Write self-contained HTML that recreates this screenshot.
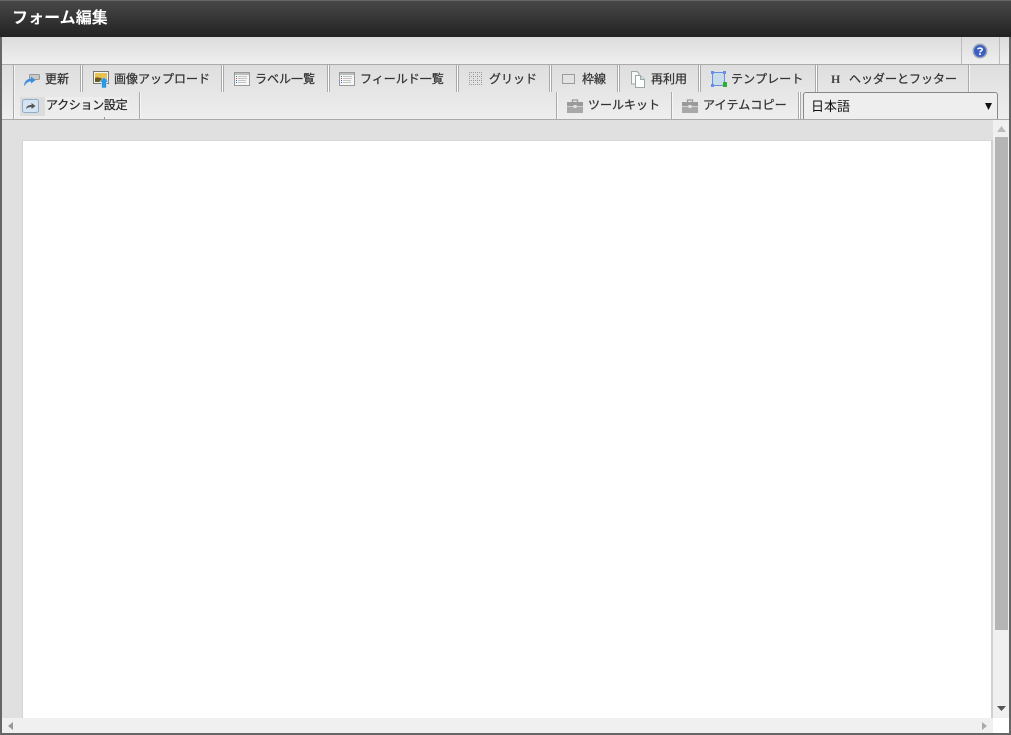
<!DOCTYPE html>
<html lang="ja"><head><meta charset="utf-8"><title>フォーム編集</title>
<style>
html,body{margin:0;padding:0}
body{width:1011px;height:735px;overflow:hidden;position:relative;background:#e0e0e0;font-family:"Liberation Sans","Noto Sans CJK JP",sans-serif;color:#333}
div,span,svg{position:absolute;display:block}
.t{font-size:12px;line-height:16px;white-space:nowrap;color:#333;-webkit-text-stroke:.25px #333}
.sep{width:1px;background:#aaa;border-right:1px solid #fff;box-shadow:1px 0 0 #aaa}
.s1{width:1px;background:#aaa;border-right:1px solid #f6f6f6}
</style></head><body>
<div style="left:0;top:0;width:1011px;height:37px;background:linear-gradient(#484848,#222);border-top:1px solid #666;box-sizing:border-box"></div>
<div style="left:12px;top:8px;font-size:16px;line-height:22px;font-weight:bold;color:#fff;white-space:nowrap;letter-spacing:.05px">フォーム編集</div>
<div style="left:2px;top:37px;width:1007px;height:28px;background:linear-gradient(#dcdcdc,#efefef);border-bottom:1px solid #aaa;box-sizing:border-box"></div>
<div style="left:961px;top:37px;width:1px;height:27px;background:#bbb"></div>
<div style="left:999px;top:37px;width:1px;height:27px;background:#bbb"></div>
<svg style="left:972px;top:43px" width="16" height="16" viewBox="0 0 16 16"><circle cx="8" cy="8" r="7.5" fill="#9fa8b8"/><circle cx="8" cy="8" r="6" fill="#3a60c4"/><path d="M5.800 6.300C6 4.800 10.200 4.600 10.200 6.600 10.200 8 8 7.800 8 9.400" fill="none" stroke="#fff" stroke-width="1.500"/><rect x="7.100" y="10.300" width="1.800" height="1.700" fill="#fff"/></svg>

<div style="left:2px;top:65px;width:1007px;height:27px;background:linear-gradient(#dedede,#e6e6e6)"></div>
<div style="left:2px;top:92px;width:1007px;height:28px;background:linear-gradient(#e6e6e6,#eeeeee);border-bottom:1px solid #aaa;box-sizing:border-box"></div>

<div class="s1" style="left:13px;top:65px;height:54px"></div>
<div class="sep" style="left:80px;top:65px;height:27px"></div>
<div class="sep" style="left:221px;top:65px;height:27px"></div>
<div class="sep" style="left:327px;top:65px;height:27px"></div>
<div class="sep" style="left:456px;top:65px;height:27px"></div>
<div class="sep" style="left:549px;top:65px;height:27px"></div>
<div class="sep" style="left:617px;top:65px;height:27px"></div>
<div class="sep" style="left:698px;top:65px;height:27px"></div>
<div class="sep" style="left:815px;top:65px;height:27px"></div>
<div class="s1" style="left:968px;top:65px;height:27px"></div>

<div class="s1" style="left:139px;top:92px;height:27px"></div>
<div class="s1" style="left:556px;top:92px;height:27px"></div>
<div class="s1" style="left:671px;top:92px;height:27px"></div>
<div class="sep" style="left:798px;top:92px;height:27px"></div>
<div style="left:104px;top:117px;width:1px;height:2px;background:#999"></div>

<svg style="left:24px;top:73px" width="16" height="13" viewBox="0 0 16 13"><rect x="5.500" y="1.500" width="10" height="5" rx="1" fill="#c8c8c8" stroke="#999"/><path d="M0 12.500C.5 8 3.500 5.800 7 5.800V3.500L11.500 7.300 7 10.500V8.500C4.500 8.500 2.500 9.500 .8 12.500Z" fill="#3f8fdc"/></svg>
<div class="t" style="left:45px;top:70.500px">更新</div>

<svg style="left:93px;top:71px" width="16" height="17" viewBox="0 0 16 17"><rect x=".5" y=".5" width="15" height="12" fill="#f4f4f4" stroke="#777"/><rect x="2" y="2" width="12" height="9" fill="#e8c050"/><path d="M2 7C5 5 8 8 14 8V11H2Z" fill="#6b5a20"/><path d="M11 6L15.500 11H13.500V17H8.500V11H6.500Z" fill="#2a9ae0" stroke="#eef" stroke-width=".5"/></svg>
<div class="t" style="left:114px;top:70.500px">画像アップロード</div>

<svg style="left:234px;top:72px" width="16" height="14" viewBox="0 0 16 14"><rect x=".5" y=".5" width="15" height="13" fill="#f6f6f6" stroke="#999"/><rect x="1" y="1" width="14" height="2" fill="#bdbdbd"/><path d="M4 4.500H13M4 6.500H13M4 8.500H12M4 10.500H12" stroke="#c4c4c4"/><path d="M2 4.500H3" stroke="#2a9a3a"/><path d="M2 6.500H3" stroke="#d04030"/><path d="M2 8.500H3" stroke="#3060d0"/><path d="M2 10.500H3" stroke="#3060d0"/></svg>
<div class="t" style="left:255px;top:70.500px">ラベル一覧</div>

<svg style="left:339px;top:72px" width="16" height="14" viewBox="0 0 16 14"><rect x=".5" y=".5" width="15" height="13" fill="#f6f6f6" stroke="#999"/><rect x="1" y="1" width="14" height="2" fill="#bdbdbd"/><path d="M4 4.500H13M4 6.500H13M4 8.500H12M4 10.500H12" stroke="#c4c4c4"/><path d="M2 4.500H3" stroke="#2a9a3a"/><path d="M2 6.500H3" stroke="#d04030"/><path d="M2 8.500H3" stroke="#3060d0"/><path d="M2 10.500H3" stroke="#3060d0"/></svg>
<div class="t" style="left:360px;top:70.500px">フィールド一覧</div>

<svg style="left:469px;top:72px" width="14" height="14" viewBox="0 0 14 14"><path d="M.5 0V14M4.500 0V14M8.500 0V14M12.500 0V14M0 .5H14M0 4.500H14M0 8.500H14M0 12.500H14" stroke="#999" stroke-dasharray="1 1" fill="none"/></svg>
<div class="t" style="left:489px;top:70.500px">グリッド</div>

<svg style="left:562px;top:74px" width="13" height="10" viewBox="0 0 13 10"><rect x=".5" y=".5" width="12" height="9" fill="none" stroke="#555" stroke-dasharray="1 1"/></svg>
<div class="t" style="left:582px;top:70.500px">枠線</div>

<svg style="left:630px;top:71px" width="16" height="17" viewBox="0 0 16 17"><path d="M1.500.5H7L9 2.500V13H1.500Z" fill="#f8f8f8" stroke="#9aa8a8"/><path d="M5.500 4.500H10.500L14.500 8.500V16.500H5.500Z" fill="#fff" stroke="#9aa8a8"/><path d="M10.500 4.500V8.500H14.500" fill="#dde" stroke="#9aa8a8"/></svg>
<div class="t" style="left:651px;top:70.500px">再利用</div>

<svg style="left:711px;top:71px" width="16" height="17" viewBox="0 0 16 17"><rect x="1.500" y="1.500" width="12" height="13" fill="#c8dcea" stroke="#6a8ce4"/><rect x="0" y="0" width="3" height="3" fill="#6a8ce4"/><rect x="12" y="0" width="3" height="3" fill="#6a8ce4"/><rect x="0" y="13" width="3" height="3" fill="#6a8ce4"/><rect x="12" y="11" width="4" height="5" fill="#30b030"/></svg>
<div class="t" style="left:731px;top:70.500px;letter-spacing:.15px">テンプレート</div>

<div style="left:831px;top:71px;font:bold 12px/16px 'Liberation Serif',serif;color:#444">H</div>
<div class="t" style="left:849px;top:70.500px">ヘッダーとフッター</div>

<div style="left:20px;top:97px;width:25px;height:19px;background:#dcdcdc"></div>
<div style="left:45px;top:97px;width:84px;height:19px;background:#ededed"></div>
<svg style="left:22px;top:99px" width="17" height="14" viewBox="0 0 17 14"><rect x=".5" y=".5" width="16" height="13" rx="2" fill="#d4e4f2" stroke="#90acc8"/><path d="M4 10C4.500 7 6.500 6 9.500 6V4L13.500 7 9.500 10V8C7.500 8 5.500 8.500 4 10Z" fill="#555"/></svg>
<div class="t" style="left:46px;top:97px;color:#222;letter-spacing:-.3px">アクション設定</div>

<svg style="left:567px;top:99px" width="16" height="14" viewBox="0 0 16 14"><path d="M5.500 3.500V1H10.500V3.500" fill="none" stroke="#999" stroke-width="1.300"/><rect x="0" y="3" width="16" height="4" fill="#9a9a9a"/><rect x="0" y="8" width="16" height="6" fill="#a8a8a8"/><rect x="0" y="7" width="16" height="1" fill="#d0d0d0"/><rect x="6.500" y="6" width="3" height="3" fill="#e4e4e4"/></svg>
<div class="t" style="left:588px;top:97px">ツールキット</div>

<svg style="left:682px;top:99px" width="16" height="14" viewBox="0 0 16 14"><path d="M5.500 3.500V1H10.500V3.500" fill="none" stroke="#999" stroke-width="1.300"/><rect x="0" y="3" width="16" height="4" fill="#9a9a9a"/><rect x="0" y="8" width="16" height="6" fill="#a8a8a8"/><rect x="0" y="7" width="16" height="1" fill="#d0d0d0"/><rect x="6.500" y="6" width="3" height="3" fill="#e4e4e4"/></svg>
<div class="t" style="left:703px;top:97px;letter-spacing:.15px">アイテムコピー</div>

<div style="left:803px;top:92px;width:195px;height:27px;box-sizing:border-box;background:#eee;border:1px solid #888;border-bottom:0;border-radius:3px 3px 0 0"></div>
<div style="left:811px;top:98px;font-size:13px;line-height:17px;color:#111;white-space:nowrap">日本語</div>
<svg style="left:985px;top:103px" width="7" height="7" viewBox="0 0 7 7"><path d="M0 0H7L3.500 7Z" fill="#111"/></svg>

<div style="left:0;top:37px;width:2px;height:698px;background:#666"></div>
<div style="left:1009px;top:37px;width:2px;height:698px;background:#666"></div>
<div style="left:0;top:733px;width:1011px;height:2px;background:#666"></div>

<div style="left:22px;top:140px;width:971px;height:578px;background:#fff;box-sizing:border-box;border-left:1px solid #d4d4d4;border-top:1px solid #d8d8d8;border-right:2px solid #d0d0d0"></div>

<div style="left:993px;top:120px;width:16px;height:598px;background:#f0f0f0"></div>
<div style="left:995px;top:137px;width:13px;height:493px;background:#b5b5b5"></div>
<svg style="left:997px;top:126px" width="9" height="6" viewBox="0 0 9 6"><path d="M4.500 0L9 6H0Z" fill="#bbb"/></svg>
<svg style="left:997px;top:706px" width="9" height="5" viewBox="0 0 9 5"><path d="M0 0H9L4.500 5Z" fill="#555"/></svg>
<div style="left:2px;top:718px;width:991px;height:15px;background:#f0f0f0"></div>
<div style="left:993px;top:718px;width:16px;height:15px;background:#fff"></div>
<svg style="left:8px;top:722px" width="5" height="8" viewBox="0 0 5 8"><path d="M5 0V8L0 4Z" fill="#999"/></svg>
<svg style="left:982px;top:722px" width="5" height="8" viewBox="0 0 5 8"><path d="M0 0V8L5 4Z" fill="#aaa"/></svg>
</body></html>
